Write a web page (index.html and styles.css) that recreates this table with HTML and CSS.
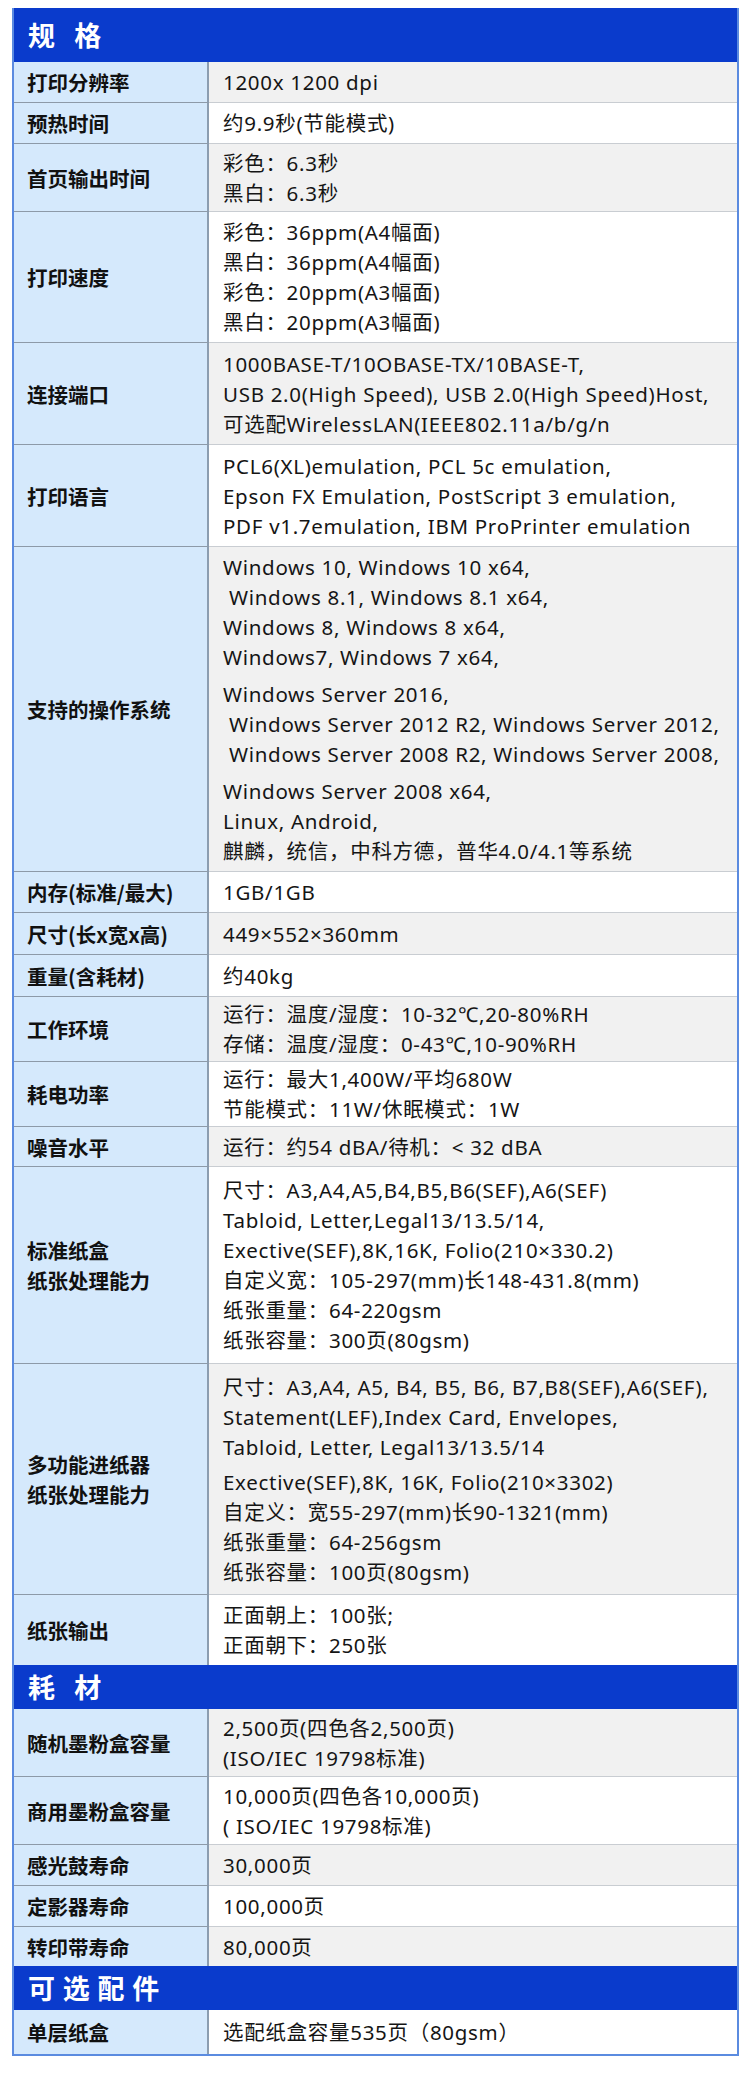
FILE: index.html
```html
<!DOCTYPE html>
<html lang="zh-CN">
<head>
<meta charset="utf-8">
<title>规格</title>
<link rel="stylesheet" href="styles.css">
</head>
<body>
<div class="sheet">
  <div class="sec sec-first">规 格</div>

  <div class="row odd"><div class="lab">打印分辨率</div><div class="val"><div class="ln">1200x 1200 dpi</div></div></div>
  <div class="row"><div class="lab">预热时间</div><div class="val"><div class="ln">约9.9秒(节能模式)</div></div></div>
  <div class="row odd r-mid"><div class="lab">首页输出时间</div><div class="val"><div class="ln">彩色：6.3秒</div><div class="ln">黑白：6.3秒</div></div></div>
  <div class="row"><div class="lab">打印速度</div><div class="val"><div class="ln">彩色：36ppm(A4幅面)</div><div class="ln">黑白：36ppm(A4幅面)</div><div class="ln">彩色：20ppm(A3幅面)</div><div class="ln">黑白：20ppm(A3幅面)</div></div></div>
  <div class="row odd r-3"><div class="lab">连接端口</div><div class="val"><div class="ln">1000BASE-T/10OBASE-TX/10BASE-T,</div><div class="ln">USB 2.0(High Speed), USB 2.0(High Speed)Host,</div><div class="ln">可选配WirelessLAN(IEEE802.11a/b/g/n</div></div></div>
  <div class="row r-3"><div class="lab">打印语言</div><div class="val"><div class="ln">PCL6(XL)emulation, PCL 5c emulation,</div><div class="ln">Epson FX Emulation, PostScript 3 emulation,</div><div class="ln">PDF v1.7emulation, IBM ProPrinter emulation</div></div></div>
  <div class="row odd"><div class="lab">支持的操作系统</div><div class="val">
    <div class="ln">Windows 10, Windows 10 x64,</div>
    <div class="ln ind">Windows 8.1, Windows 8.1 x64,</div>
    <div class="ln">Windows 8, Windows 8 x64,</div>
    <div class="ln">Windows7, Windows 7 x64,</div>
    <div class="ln gap">Windows Server 2016,</div>
    <div class="ln ind">Windows Server 2012 R2, Windows Server 2012,</div>
    <div class="ln ind">Windows Server 2008 R2, Windows Server 2008,</div>
    <div class="ln gap">Windows Server 2008 x64,</div>
    <div class="ln">Linux, Android,</div>
    <div class="ln">麒麟，统信，中科方德，普华4.0/4.1等系统</div>
  </div></div>
  <div class="row"><div class="lab">内存(标准/最大)</div><div class="val"><div class="ln">1GB/1GB</div></div></div>
  <div class="row odd r-1"><div class="lab">尺寸(长x宽x高)</div><div class="val"><div class="ln">449×552×360mm</div></div></div>
  <div class="row r-1"><div class="lab">重量(含耗材)</div><div class="val"><div class="ln">约40kg</div></div></div>
  <div class="row odd r-tight"><div class="lab">工作环境</div><div class="val"><div class="ln">运行：温度/湿度：10-32℃,20-80%RH</div><div class="ln">存储：温度/湿度：0-43℃,10-90%RH</div></div></div>
  <div class="row r-tight"><div class="lab">耗电功率</div><div class="val"><div class="ln">运行：最大1,400W/平均680W</div><div class="ln">节能模式：11W/休眠模式：1W</div></div></div>
  <div class="row odd r-0"><div class="lab">噪音水平</div><div class="val"><div class="ln">运行：约54 dBA/待机：&lt; 32 dBA</div></div></div>
  <div class="row r-loose"><div class="lab">标准纸盒<br>纸张处理能力</div><div class="val">
    <div class="ln">尺寸：A3,A4,A5,B4,B5,B6(SEF),A6(SEF)</div>
    <div class="ln">Tabloid, Letter,Legal13/13.5/14,</div>
    <div class="ln">Exective(SEF),8K,16K, Folio(210×330.2)</div>
    <div class="ln">自定义宽：105-297(mm)长148-431.8(mm)</div>
    <div class="ln">纸张重量：64-220gsm</div>
    <div class="ln">纸张容量：300页(80gsm)</div>
  </div></div>
  <div class="row odd r-loose"><div class="lab">多功能进纸器<br>纸张处理能力</div><div class="val">
    <div class="ln">尺寸：A3,A4, A5, B4, B5, B6, B7,B8(SEF),A6(SEF),</div>
    <div class="ln">Statement(LEF),Index Card, Envelopes,</div>
    <div class="ln">Tabloid, Letter, Legal13/13.5/14</div>
    <div class="ln gap-s">Exective(SEF),8K, 16K, Folio(210×3302)</div>
    <div class="ln">自定义：宽55-297(mm)长90-1321(mm)</div>
    <div class="ln">纸张重量：64-256gsm</div>
    <div class="ln">纸张容量：100页(80gsm)</div>
  </div></div>
  <div class="row r-mid2 last"><div class="lab">纸张输出</div><div class="val"><div class="ln">正面朝上：100张;</div><div class="ln">正面朝下：250张</div></div></div>

  <div class="sec">耗 材</div>

  <div class="row odd r-mid"><div class="lab">随机墨粉盒容量</div><div class="val"><div class="ln">2,500页(四色各2,500页)</div><div class="ln">(ISO/IEC 19798标准)</div></div></div>
  <div class="row r-mid"><div class="lab">商用墨粉盒容量</div><div class="val"><div class="ln">10,000页(四色各10,000页)</div><div class="ln">( ISO/IEC 19798标准)</div></div></div>
  <div class="row odd"><div class="lab">感光鼓寿命</div><div class="val"><div class="ln">30,000页</div></div></div>
  <div class="row"><div class="lab">定影器寿命</div><div class="val"><div class="ln">100,000页</div></div></div>
  <div class="row odd r-0 last"><div class="lab">转印带寿命</div><div class="val"><div class="ln">80,000页</div></div></div>

  <div class="sec sec-narrow">可 选 配 件</div>

  <div class="row r-six end"><div class="lab">单层纸盒</div><div class="val"><div class="ln">选配纸盒容量535页（80gsm）</div></div></div>
</div>
</body>
</html>
```

FILE: styles.css
```css
html, body {
  margin: 0;
  padding: 0;
  background: #ffffff;
}

body {
  font-family: "Noto Sans", "Noto Sans CJK SC", sans-serif;
  color: #151515;
}

.sheet {
  margin: 8px 0 0 12px;
  width: 723px;
  border-left: 2px solid #5b8be0;
  border-right: 2px solid #5b8be0;
  border-bottom: 2px solid #5b8be0;
}

.sec {
  background: #0a3bcc;
  color: #ffffff;
  font-family: "Noto Sans CJK SC", sans-serif;
  font-weight: 700;
  font-size: 27px;
  line-height: 44px;
  height: 44px;
  padding-left: 14px;
  letter-spacing: 6.5px;
  white-space: pre;
}

.sec-first {
  height: 54px;
  line-height: 54px;
}

.sec-narrow {
  letter-spacing: 0.8px;
}

.row {
  display: grid;
  grid-template-columns: 195px 1fr;
  border-bottom: 1px solid #c9cdd2;
}

.row.last, .row.end {
  border-bottom: none;
}

.lab {
  background: #d5e9fc;
  border-right: 2px solid #8c9db0;
  border-bottom: 1px solid #8d9aa8;
  margin-bottom: -1px;
  display: flex;
  align-items: center;
  padding-left: 13px;
  font-family: "Noto Sans CJK SC", sans-serif;
  font-weight: 700;
  font-size: 20.5px;
  line-height: 30px;
  color: #111111;
}

.row.last .lab, .row.end .lab {
  border-bottom: none;
  margin-bottom: 0;
}

.val {
  background: #ffffff;
  padding: 5px 8px 5px 14px;
  font-size: 20.5px;
  letter-spacing: 0.7px;
  line-height: 30px;
  color: #151515;
}

.row.odd .val {
  background: #f1f1f1;
}

.ln {
  white-space: nowrap;
}

.ln.ind {
  padding-left: 6px;
}

.ln.gap {
  margin-top: 7px;
}

.ln.gap-s {
  margin-top: 5px;
}

.r-0 .val { padding-top: 4.5px; padding-bottom: 4.5px; }
.r-1 .val { padding-top: 5.5px; padding-bottom: 5.5px; }
.r-tight .val { padding-top: 2px; padding-bottom: 2px; }
.r-mid .val { padding-top: 3.5px; padding-bottom: 3.5px; }
.r-mid2 .val { padding-top: 5px; padding-bottom: 5px; }
.r-3 .val { padding-top: 5.5px; padding-bottom: 5.5px; }
.r-loose .val { padding-top: 8px; padding-bottom: 7.5px; }
.r-six .val { padding-top: 7px; padding-bottom: 7px; }
```
